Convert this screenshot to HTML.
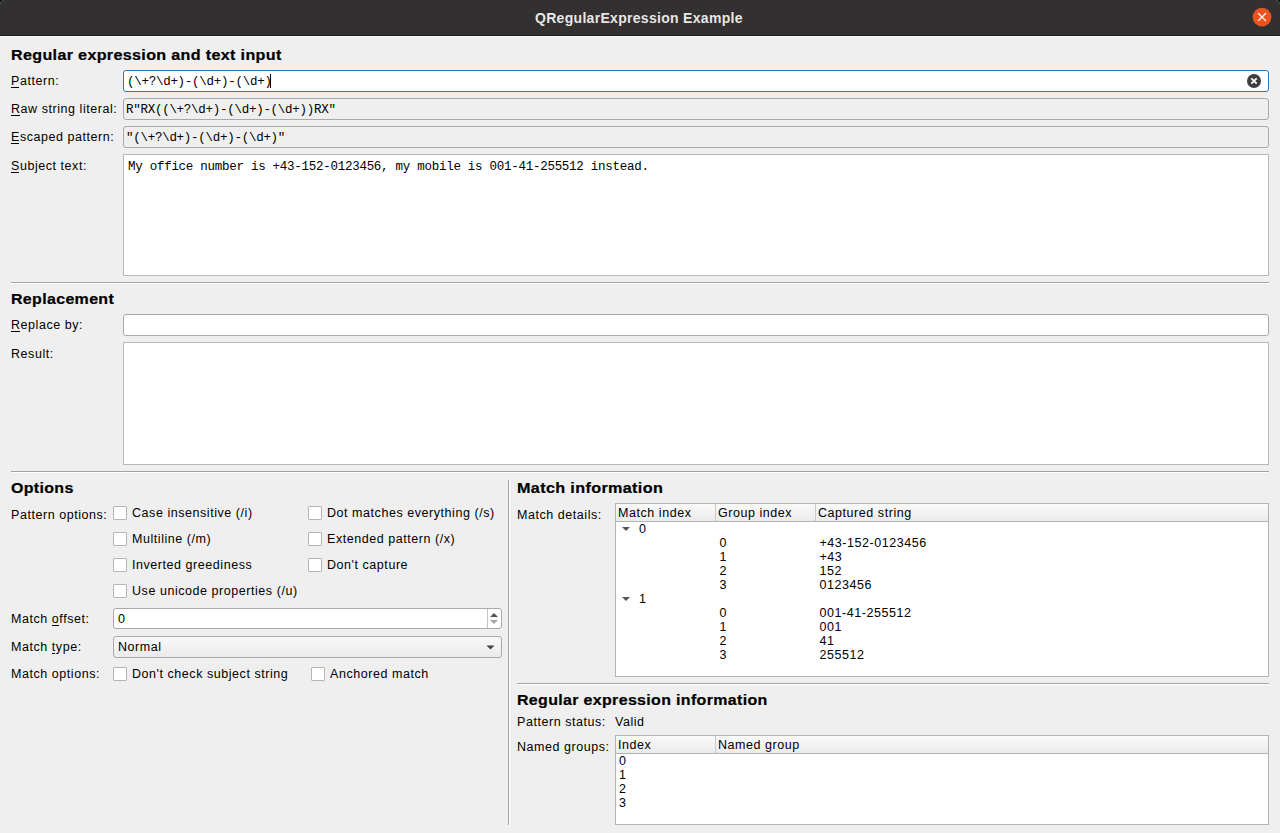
<!DOCTYPE html>
<html><head><meta charset="utf-8">
<style>
html,body{margin:0;padding:0;}
body{width:1280px;height:833px;background:#efefef;position:relative;overflow:hidden;font-family:"Liberation Sans",sans-serif;}
div{box-sizing:border-box;}
.a{position:absolute;}
.t{position:absolute;font-size:12.5px;line-height:14px;letter-spacing:0.55px;color:#000;white-space:nowrap;}
.h{position:absolute;font-size:14px;line-height:16px;font-weight:bold;letter-spacing:0.3px;color:#000;white-space:nowrap;transform-origin:0 0;transform:scaleX(1.14);-webkit-text-stroke:0.2px #000;}
.m{position:absolute;font-family:"Liberation Mono",monospace;font-size:12.5px;letter-spacing:-0.27px;line-height:14px;color:#000;white-space:pre;}
.u{position:relative;}.u::after{content:"";position:absolute;left:0;right:0.55px;top:13.4px;height:1px;background:#000;}
.fld{position:absolute;background:#fff;border:1px solid #a9a9a9;border-radius:3px;}
.ro{background:#efefef;}
.sep{position:absolute;height:2px;border-top:1px solid #a3a3a3;border-bottom:1px solid #fff;}
.cb{position:absolute;width:14px;height:14px;background:#fff;border:1px solid #b5b5b5;border-radius:1px;}
.tree{position:absolute;background:#fff;border:1px solid #b3b3b3;}
.hdr{position:absolute;left:0;right:0;top:0;background:linear-gradient(#fafafa,#ebebeb);border-bottom:1px solid #b3b3b3;}
.col{position:absolute;top:0;bottom:0;width:1px;background:#c9c9c9;}
</style></head><body>
<!-- title bar -->
<div class="a" style="left:0;top:0;width:1280px;height:36px;background:#323030;border-bottom:1px solid #1c1b1b;"></div>
<div class="a" style="left:0;top:36px;width:1280px;height:1px;background:#f9f9f9;"></div>
<div class="a" style="left:535px;top:10px;font-size:14px;line-height:17px;font-weight:bold;letter-spacing:0.3px;color:#e8e6e3;white-space:nowrap;">QRegularExpression Example</div>
<svg class="a" style="left:1250px;top:5px;" width="24" height="24"><circle cx="12" cy="12.1" r="9.35" fill="#e95420"/><path d="M8.2 8.3 L15.8 15.9 M15.8 8.3 L8.2 15.9" stroke="#fff" stroke-width="1.3" fill="none"/></svg>

<svg class="a" style="left:0;top:0;" width="6" height="6"><path d="M0 0 H3.5 A3.5 3.5 0 0 0 0 3.5 Z" fill="#0c0a0a"/><path d="M4.5 0.3 A4.2 4.2 0 0 0 0.3 4.5" stroke="#4a4d50" stroke-width="1" fill="none"/></svg>
<svg class="a" style="left:1274px;top:0;" width="6" height="6"><path d="M6 0 H2.5 A3.5 3.5 0 0 1 6 3.5 Z" fill="#0c0a0a"/><path d="M1.5 0.3 A4.2 4.2 0 0 1 5.7 4.5" stroke="#4a4d50" stroke-width="1" fill="none"/></svg>
<!-- section 1 -->
<div class="h" style="left:11px;top:47px;transform:scaleX(1.149);">Regular expression and text input</div>
<div class="t" style="left:11px;top:74px;"><span class="u">P</span>attern:</div>
<div class="t" style="left:11px;top:102px;"><span class="u">R</span>aw string literal:</div>
<div class="t" style="left:11px;top:130px;"><span class="u">E</span>scaped pattern:</div>
<div class="t" style="left:11px;top:159px;"><span class="u">S</span>ubject text:</div>

<div class="fld" style="left:123px;top:70px;width:1146px;height:22px;border-color:#2c76ad;"></div>
<div class="m" style="left:127px;top:75px;">(\+?\d+)-(\d+)-(\d+)</div>
<div class="a" style="left:270px;top:74px;width:1px;height:14px;background:#000;"></div>
<div class="a" style="left:1247px;top:74px;width:14px;height:14px;border-radius:50%;background:#3d3d3d;"></div>
<svg class="a" style="left:1247px;top:74px;" width="14" height="14"><path d="M4.3 4.3 L9.7 9.7 M9.7 4.3 L4.3 9.7" stroke="#fff" stroke-width="1.8" fill="none"/></svg>

<div class="fld ro" style="left:123px;top:98px;width:1146px;height:22px;"></div>
<div class="m" style="left:126px;top:103px;">R"RX((\+?\d+)-(\d+)-(\d+))RX"</div>
<div class="fld ro" style="left:123px;top:126px;width:1146px;height:22px;"></div>
<div class="m" style="left:126px;top:131px;">"(\+?\d+)-(\d+)-(\d+)"</div>
<div class="fld" style="left:123px;top:154px;width:1146px;height:122px;border-radius:0;border-color:#b8b8b8;"></div>
<div class="m" style="left:128px;top:160px;">My office number is +43-152-0123456, my mobile is 001-41-255512 instead.</div>

<div class="sep" style="left:11px;top:282px;width:1258px;"></div>

<!-- section 2 -->
<div class="h" style="left:11px;top:290.7px;">Replacement</div>
<div class="t" style="left:11px;top:318px;"><span class="u">R</span>eplace by:</div>
<div class="t" style="left:11px;top:347px;">Result:</div>
<div class="fld" style="left:123px;top:314px;width:1146px;height:22px;"></div>
<div class="fld" style="left:123px;top:342px;width:1146px;height:123px;border-radius:0;border-color:#b8b8b8;"></div>

<div class="sep" style="left:11px;top:471px;width:1258px;"></div>

<!-- options -->
<div class="h" style="left:11px;top:480px;">Options</div>
<div class="t" style="left:11px;top:508px;">Pattern options:</div>
<div class="cb" style="left:113px;top:506px;"></div><div class="t" style="left:132px;top:506px;">Case insensitive (/i)</div>
<div class="cb" style="left:308px;top:506px;"></div><div class="t" style="left:327px;top:506px;">Dot matches everything (/s)</div>
<div class="cb" style="left:113px;top:532px;"></div><div class="t" style="left:132px;top:532px;">Multiline (/m)</div>
<div class="cb" style="left:308px;top:532px;"></div><div class="t" style="left:327px;top:532px;">Extended pattern (/x)</div>
<div class="cb" style="left:113px;top:558px;"></div><div class="t" style="left:132px;top:558px;">Inverted greediness</div>
<div class="cb" style="left:308px;top:558px;"></div><div class="t" style="left:327px;top:558px;">Don't capture</div>
<div class="cb" style="left:113px;top:584px;"></div><div class="t" style="left:132px;top:584px;">Use unicode properties (/u)</div>

<div class="t" style="left:11px;top:612px;">Match <span class="u">o</span>ffset:</div>
<div class="fld" style="left:113px;top:608px;width:389px;height:21px;"></div>
<div class="a" style="left:487px;top:609px;width:1px;height:19px;background:#c4c4c4;"></div>
<svg class="a" style="left:488px;top:609px;" width="13" height="19"><path d="M2 8 L6 4 L10 8 Z" fill="#555"/><path d="M2 11 L10 11 L6 15 Z" fill="#a8a8a8"/></svg>
<div class="t" style="left:118px;top:612px;">0</div>

<div class="t" style="left:11px;top:640px;">Match <span class="u">t</span>ype:</div>
<div class="fld" style="left:113px;top:636px;width:389px;height:22px;background:linear-gradient(#f8f8f8,#ebebeb);"></div>
<div class="t" style="left:118px;top:640px;">Normal</div>
<svg class="a" style="left:486px;top:644.7px;" width="10" height="6"><path d="M0.5 0.5 L8.5 0.5 L4.5 4.5 Z" fill="#444"/></svg>

<div class="t" style="left:11px;top:667px;">Match options:</div>
<div class="cb" style="left:113px;top:667px;"></div><div class="t" style="left:132px;top:667px;">Don't check subject string</div>
<div class="cb" style="left:311px;top:667px;"></div><div class="t" style="left:330px;top:667px;">Anchored match</div>

<!-- vertical separator -->
<div class="a" style="left:508px;top:480px;width:2px;height:345px;border-left:1px solid #a3a3a3;border-right:1px solid #fff;"></div>

<!-- match info -->
<div class="h" style="left:517px;top:480px;transform:scaleX(1.156);">Match information</div>
<div class="t" style="left:517px;top:508px;">Match details:</div>
<div class="tree" style="left:615px;top:503px;width:654px;height:174px;">
  <div class="hdr" style="height:18px;">
    <div class="col" style="left:99px;"></div>
    <div class="col" style="left:199px;"></div>
  </div>
</div>
<div class="t" style="left:618px;top:506px;">Match index</div>
<div class="t" style="left:718px;top:506px;">Group index</div>
<div class="t" style="left:818px;top:506px;">Captured string</div>
<svg class="a" style="left:621px;top:526px;" width="10" height="6"><path d="M1 1 L9 1 L5 5 Z" fill="#555"/></svg>
<div class="t" style="left:639px;top:522px;">0</div>
<div class="t" style="left:719.5px;top:536px;">0</div><div class="t" style="left:819.5px;top:536px;">+43-152-0123456</div>
<div class="t" style="left:719.5px;top:550px;">1</div><div class="t" style="left:819.5px;top:550px;">+43</div>
<div class="t" style="left:719.5px;top:564px;">2</div><div class="t" style="left:819.5px;top:564px;">152</div>
<div class="t" style="left:719.5px;top:578px;">3</div><div class="t" style="left:819.5px;top:578px;">0123456</div>
<svg class="a" style="left:621px;top:596px;" width="10" height="6"><path d="M1 1 L9 1 L5 5 Z" fill="#555"/></svg>
<div class="t" style="left:639px;top:592px;">1</div>
<div class="t" style="left:719.5px;top:606px;">0</div><div class="t" style="left:819.5px;top:606px;">001-41-255512</div>
<div class="t" style="left:719.5px;top:620px;">1</div><div class="t" style="left:819.5px;top:620px;">001</div>
<div class="t" style="left:719.5px;top:634px;">2</div><div class="t" style="left:819.5px;top:634px;">41</div>
<div class="t" style="left:719.5px;top:648px;">3</div><div class="t" style="left:819.5px;top:648px;">255512</div>

<div class="sep" style="left:517px;top:683px;width:752px;"></div>

<div class="h" style="left:517px;top:692px;transform:scaleX(1.14);">Regular expression information</div>
<div class="t" style="left:517px;top:715px;">Pattern status:</div>
<div class="t" style="left:615px;top:715px;">Valid</div>
<div class="t" style="left:517px;top:740px;">Named groups:</div>
<div class="tree" style="left:615px;top:735px;width:654px;height:90px;">
  <div class="hdr" style="height:18px;">
    <div class="col" style="left:99px;"></div>
  </div>
</div>
<div class="t" style="left:618px;top:738px;">Index</div>
<div class="t" style="left:718px;top:738px;">Named group</div>
<div class="t" style="left:619px;top:754px;">0</div>
<div class="t" style="left:619px;top:768px;">1</div>
<div class="t" style="left:619px;top:782px;">2</div>
<div class="t" style="left:619px;top:796px;">3</div>
</body></html>
